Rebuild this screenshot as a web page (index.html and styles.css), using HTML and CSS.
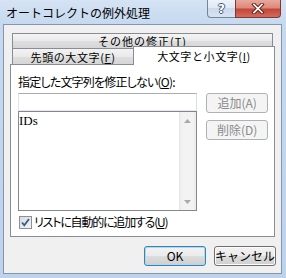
FILE: index.html
```html
<!DOCTYPE html>
<html lang="ja">
<head>
<meta charset="utf-8">
<title>オートコレクトの例外処理</title>
<link rel="stylesheet" href="styles.css">
</head>
<body>
<div class="window">
  <div class="titlebar">
    <div class="title">オートコレクトの例外処理</div>
    <div class="caption-buttons">
      <div class="cap help"><span class="q">?</span></div>
      <div class="cap close">
        <svg width="14" height="11" viewBox="0 0 14 11"><path d="M3 1.5L11 9.5M11 1.5L3 9.5" stroke="#5b2019" stroke-width="3.6" stroke-linecap="square" fill="none"/><path d="M3 1.5L11 9.5M11 1.5L3 9.5" stroke="#ffffff" stroke-width="1.7" stroke-linecap="square" fill="none"/></svg>
      </div>
    </div>
  </div>
  <div class="client">
    <div class="tabctl">
      <div class="tabrow">
        <div class="tab full">その他の修正(<u>T</u>)</div>
      </div>
      <div class="tabrow">
        <div class="tab first">先頭の大文字(<u>F</u>)</div>
        <div class="tab selected">大文字と小文字(<u>I</u>)</div>
      </div>
      <div class="panel">
        <div class="label">指定した文字列を修正しない(<u>O</u>):</div>
        <div class="editrow">
          <div class="editcol">
            <div class="input"></div>
            <div class="list">
              <div class="items"><div class="item">IDs</div></div>
              <div class="vscroll">
                <div class="arrow"><svg width="7" height="4" viewBox="0 0 7 4"><path d="M0 4L3.5 0L7 4Z" fill="#a9a9a9"/></svg></div>
                <div class="track"></div>
                <div class="arrow"><svg width="7" height="4" viewBox="0 0 7 4"><path d="M0 0L3.5 4L7 0Z" fill="#a9a9a9"/></svg></div>
              </div>
            </div>
          </div>
          <div class="btncol">
            <div class="btn disabled">追加(A)</div>
            <div class="btn disabled">削除(D)</div>
          </div>
        </div>
        <div class="check">
          <span class="box"><svg width="11" height="11" viewBox="0 0 11 11"><path d="M2 5.5L4.3 8.3L9 2" stroke="#3a5a8c" stroke-width="1.8" fill="none"/></svg></span>
          <span class="check-text">リストに自動的に追加する(<u>U</u>)</span>
        </div>
      </div>
    </div>
    <div class="footer">
      <div class="btn default">OK</div>
      <div class="btn">キャンセル</div>
    </div>
  </div>
</div>
</body>
</html>
```

FILE: styles.css
```css
* { box-sizing: border-box; margin: 0; padding: 0; }
html, body { width: 286px; height: 278px; overflow: hidden; }
body {
  font-family: "Noto Sans CJK JP", "Noto Sans", sans-serif;
  font-size: 12px;
  color: #000;
}
u { text-decoration: underline; text-underline-offset: 1px; }

.window {
  width: 286px;
  height: 278px;
  display: flex;
  flex-direction: column;
  background: linear-gradient(#d5e3f4 0, #c6d9ef 24px, #bdd3ec 100%);
}

.titlebar {
  height: 24px;
  flex: none;
  display: flex;
  align-items: flex-start;
}
.title {
  padding-left: 6px;
  line-height: 26px;
  font-size: 12px;
}
.caption-buttons {
  margin-left: auto;
  margin-right: 5px;
  display: flex;
}
.cap {
  height: 18px;
  display: flex;
  align-items: center;
  justify-content: center;
}
.help {
  width: 28px;
  border: 1px solid #72859e;
  border-top: none;
  border-right: none;
  border-radius: 0 0 0 4px;
  background: linear-gradient(#eef3fa, #dfe8f4 50%, #cbd9ec 50%, #d8e3f1);
}
.q {
  font-family: "DejaVu Sans", sans-serif;
  font-weight: bold;
  font-size: 12px;
  line-height: 12px;
  color: #fff;
  text-shadow: 1px 0 0 #44597a, -1px 0 0 #44597a, 0 1px 0 #44597a, 0 -1px 0 #44597a;
}
.close {
  width: 46px;
  border: 1px solid #7d3a33;
  border-top: none;
  border-radius: 0 0 4px 0;
  background: linear-gradient(#e9a89d, #dc8a7b 45%, #c3473a 55%, #d46b5c);
}

.client {
  flex: 1;
  margin: 0 4px 4px 3px;
  border: 1px solid #8495ad;
  background: #f0f0f0;
  display: flex;
  flex-direction: column;
}

.tabctl {
  margin: 8px 6px 0 6px;
  display: flex;
  flex-direction: column;
}
.tabrow {
  display: flex;
  padding: 0 2px;
}
.tab {
  border: 1px solid #898c95;
  border-bottom: none;
  background: linear-gradient(#f4f4f4, #e9e9e9 50%, #dedede 50%, #d6d6d6);
  text-align: center;
  white-space: nowrap;
  font-size: 11px;
  letter-spacing: 0.6px;
}
.tab.full {
  flex: 1;
  height: 15px;
  line-height: 14px;
  letter-spacing: 1px;
}
.tab.first {
  width: 122px;
  height: 16px;
  line-height: 16px;
}
.tab.selected {
  flex: 1;
  height: 19px;
  line-height: 19px;
  margin: -2px -2px -1px -1px;
  background: #fff;
  position: relative;
  z-index: 1;
}

.panel {
  height: 173px;
  border: 1px solid #898c95;
  background: #fff;
  padding: 10px 6px 0 7px;
}
.label {
  height: 14px;
  line-height: 14px;
  margin-bottom: 4px;
  font-feature-settings: "palt";
  letter-spacing: -0.8px;
  white-space: nowrap;
}
.editrow {
  display: flex;
  gap: 9px;
}
.editcol {
  width: 180px;
  display: flex;
  flex-direction: column;
}
.input {
  height: 18px;
  border: 1px solid;
  border-color: #abadb3 #dbdfe6 #e3e9ef #e2e3ea;
  background: #fff;
}
.list {
  height: 100px;
  border: 1px solid #828790;
  display: flex;
  background: #fff;
}
.items {
  flex: 1;
  padding: 1px 0 0 0;
}
.item {
  font-family: "Liberation Serif", serif;
  font-size: 13px;
  line-height: 16px;
}
.vscroll {
  width: 17px;
  display: flex;
  flex-direction: column;
  background: linear-gradient(to right, #e6e6e6 0, #f2f2f2 3px, #f3f3f3 14px, #e9e9e9 17px);
}
.arrow {
  height: 17px;
  display: flex;
  align-items: center;
  justify-content: center;
}
.track { flex: 1; }

.btncol {
  width: 62px;
  display: flex;
  flex-direction: column;
  gap: 7px;
}
.btn {
  height: 20px;
  border: 1px solid #707070;
  border-radius: 3px;
  background: linear-gradient(#f2f2f2 0, #ebebeb 50%, #dddddd 50%, #cfcfcf 100%);
  box-shadow: inset 0 0 0 1px #fbfbfb;
  display: flex;
  align-items: center;
  justify-content: center;
  white-space: nowrap;
  line-height: 14px;
}
.btn.disabled {
  border-color: #adb2b5;
  background: #f4f4f4;
  box-shadow: none;
  color: #8a8a8a;
}
.btn.default {
  border-color: #3c7fb1;
  box-shadow: inset 0 0 0 1px #a9dcf3;
}

.check {
  margin-top: 4px;
  height: 14px;
  display: flex;
  align-items: center;
  gap: 2px;
}
.box {
  width: 13px;
  height: 13px;
  margin-left: 1px;
  border: 1px solid #8e8f8f;
  background: linear-gradient(135deg, #d7dbe1, #f4f4f6);
  display: flex;
  align-items: center;
  justify-content: center;
}
.check-text {
  line-height: 14px;
  font-feature-settings: "palt";
  letter-spacing: -1.2px;
  white-space: nowrap;
}

.footer {
  margin-top: 9px;
  padding-right: 5px;
  display: flex;
  justify-content: flex-end;
  gap: 8px;
}
.footer .btn { width: 62px; }
```
